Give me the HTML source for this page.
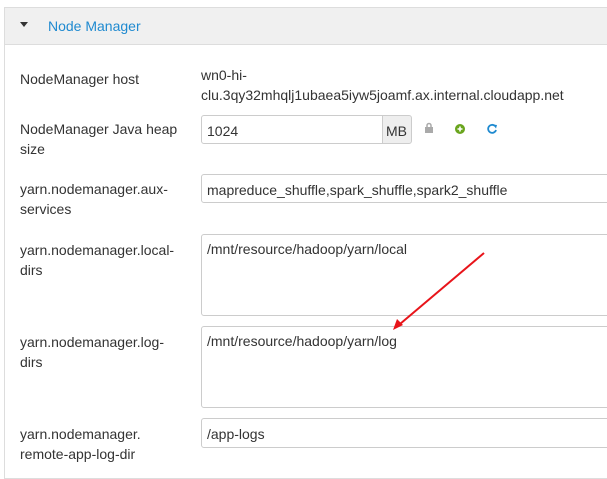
<!DOCTYPE html><html><head><style>
body{margin:0;width:607px;height:467px;overflow:hidden;background:#fff;font-family:"Liberation Sans",Arial,sans-serif;font-size:14px;color:#333;position:relative}
.a{position:absolute}
.panel{left:4px;top:7px;width:620px;height:470px;border:1px solid #ddd}
.hd{left:5px;top:8px;width:610px;height:36px;background:#f0f0f0;border-bottom:1px solid #ddd}
.lbl{left:20px;line-height:20px;width:170px}
.in{border:1px solid #ccc;border-radius:3px;box-sizing:border-box;padding:6px 5px;line-height:18px;color:#333}
</style></head><body>
<div class="a panel"></div>
<div class="a hd"></div>
<div class="a" style="left:20px;top:22px;width:0;height:0;border-left:4px solid transparent;border-right:4px solid transparent;border-top:5px solid #333"></div>
<div class="a" style="left:48px;top:17px;color:#1f8ad0;font-size:14px;line-height:18px">Node Manager</div>

<div class="a lbl" style="top:69px">NodeManager host</div>
<div class="a" style="left:201px;top:65px;line-height:20px">wn0-hi-<br>clu.3qy32mhqlj1ubaea5iyw5joamf.ax.internal.cloudapp.net</div>

<div class="a lbl" style="top:119px">NodeManager Java heap<br>size</div>
<div class="a in" style="left:201px;top:115px;width:182px;height:29px;border-radius:3px 0 0 3px">1024</div>
<div class="a in" style="left:382px;top:115px;width:30px;height:29px;background:#eee;border-radius:0 3px 3px 0;padding:6px 3px">MB</div>
<svg class="a" style="left:424px;top:122px" width="90" height="14">
<rect x="1" y="5" width="8" height="6" fill="#aaa"/><path d="M3 5V3.5a2 2 0 0 1 4 0V5" stroke="#aaa" stroke-width="1.5" fill="none"/>
<circle cx="36" cy="7" r="5" fill="#6aa51e"/><path d="M33.5 7h5M36 4.5v5" stroke="#fff" stroke-width="1.6"/>
<path d="M71 4a4 4 0 1 0 1 4" stroke="#1f8ad0" stroke-width="1.8" fill="none"/><path d="M69 2.5l4 0.5-1 3.5z" fill="#1f8ad0"/>
</svg>

<div class="a lbl" style="top:179px">yarn.nodemanager.aux-<br>services</div>
<div class="a in" style="left:201px;top:174px;width:420px;height:29px">mapreduce_shuffle,spark_shuffle,spark2_shuffle</div>

<div class="a lbl" style="top:240px">yarn.nodemanager.local-<br>dirs</div>
<div class="a in" style="left:201px;top:234px;width:420px;height:82px;padding-top:5px">/mnt/resource/hadoop/yarn/local</div>

<div class="a lbl" style="top:332px">yarn.nodemanager.log-<br>dirs</div>
<div class="a in" style="left:201px;top:326px;width:420px;height:82px;padding-top:5px">/mnt/resource/hadoop/yarn/log</div>

<div class="a lbl" style="top:424px">yarn.nodemanager.<br>remote-app-log-dir</div>
<div class="a in" style="left:201px;top:418px;width:420px;height:30px">/app-logs</div>

<svg class="a" style="left:0;top:0" width="607" height="467">
<line x1="484" y1="253" x2="400" y2="324" stroke="#e8141a" stroke-width="2"/>
<path d="M393 330l4-11 6 6z" fill="#e8141a"/>
</svg>
</body></html>
